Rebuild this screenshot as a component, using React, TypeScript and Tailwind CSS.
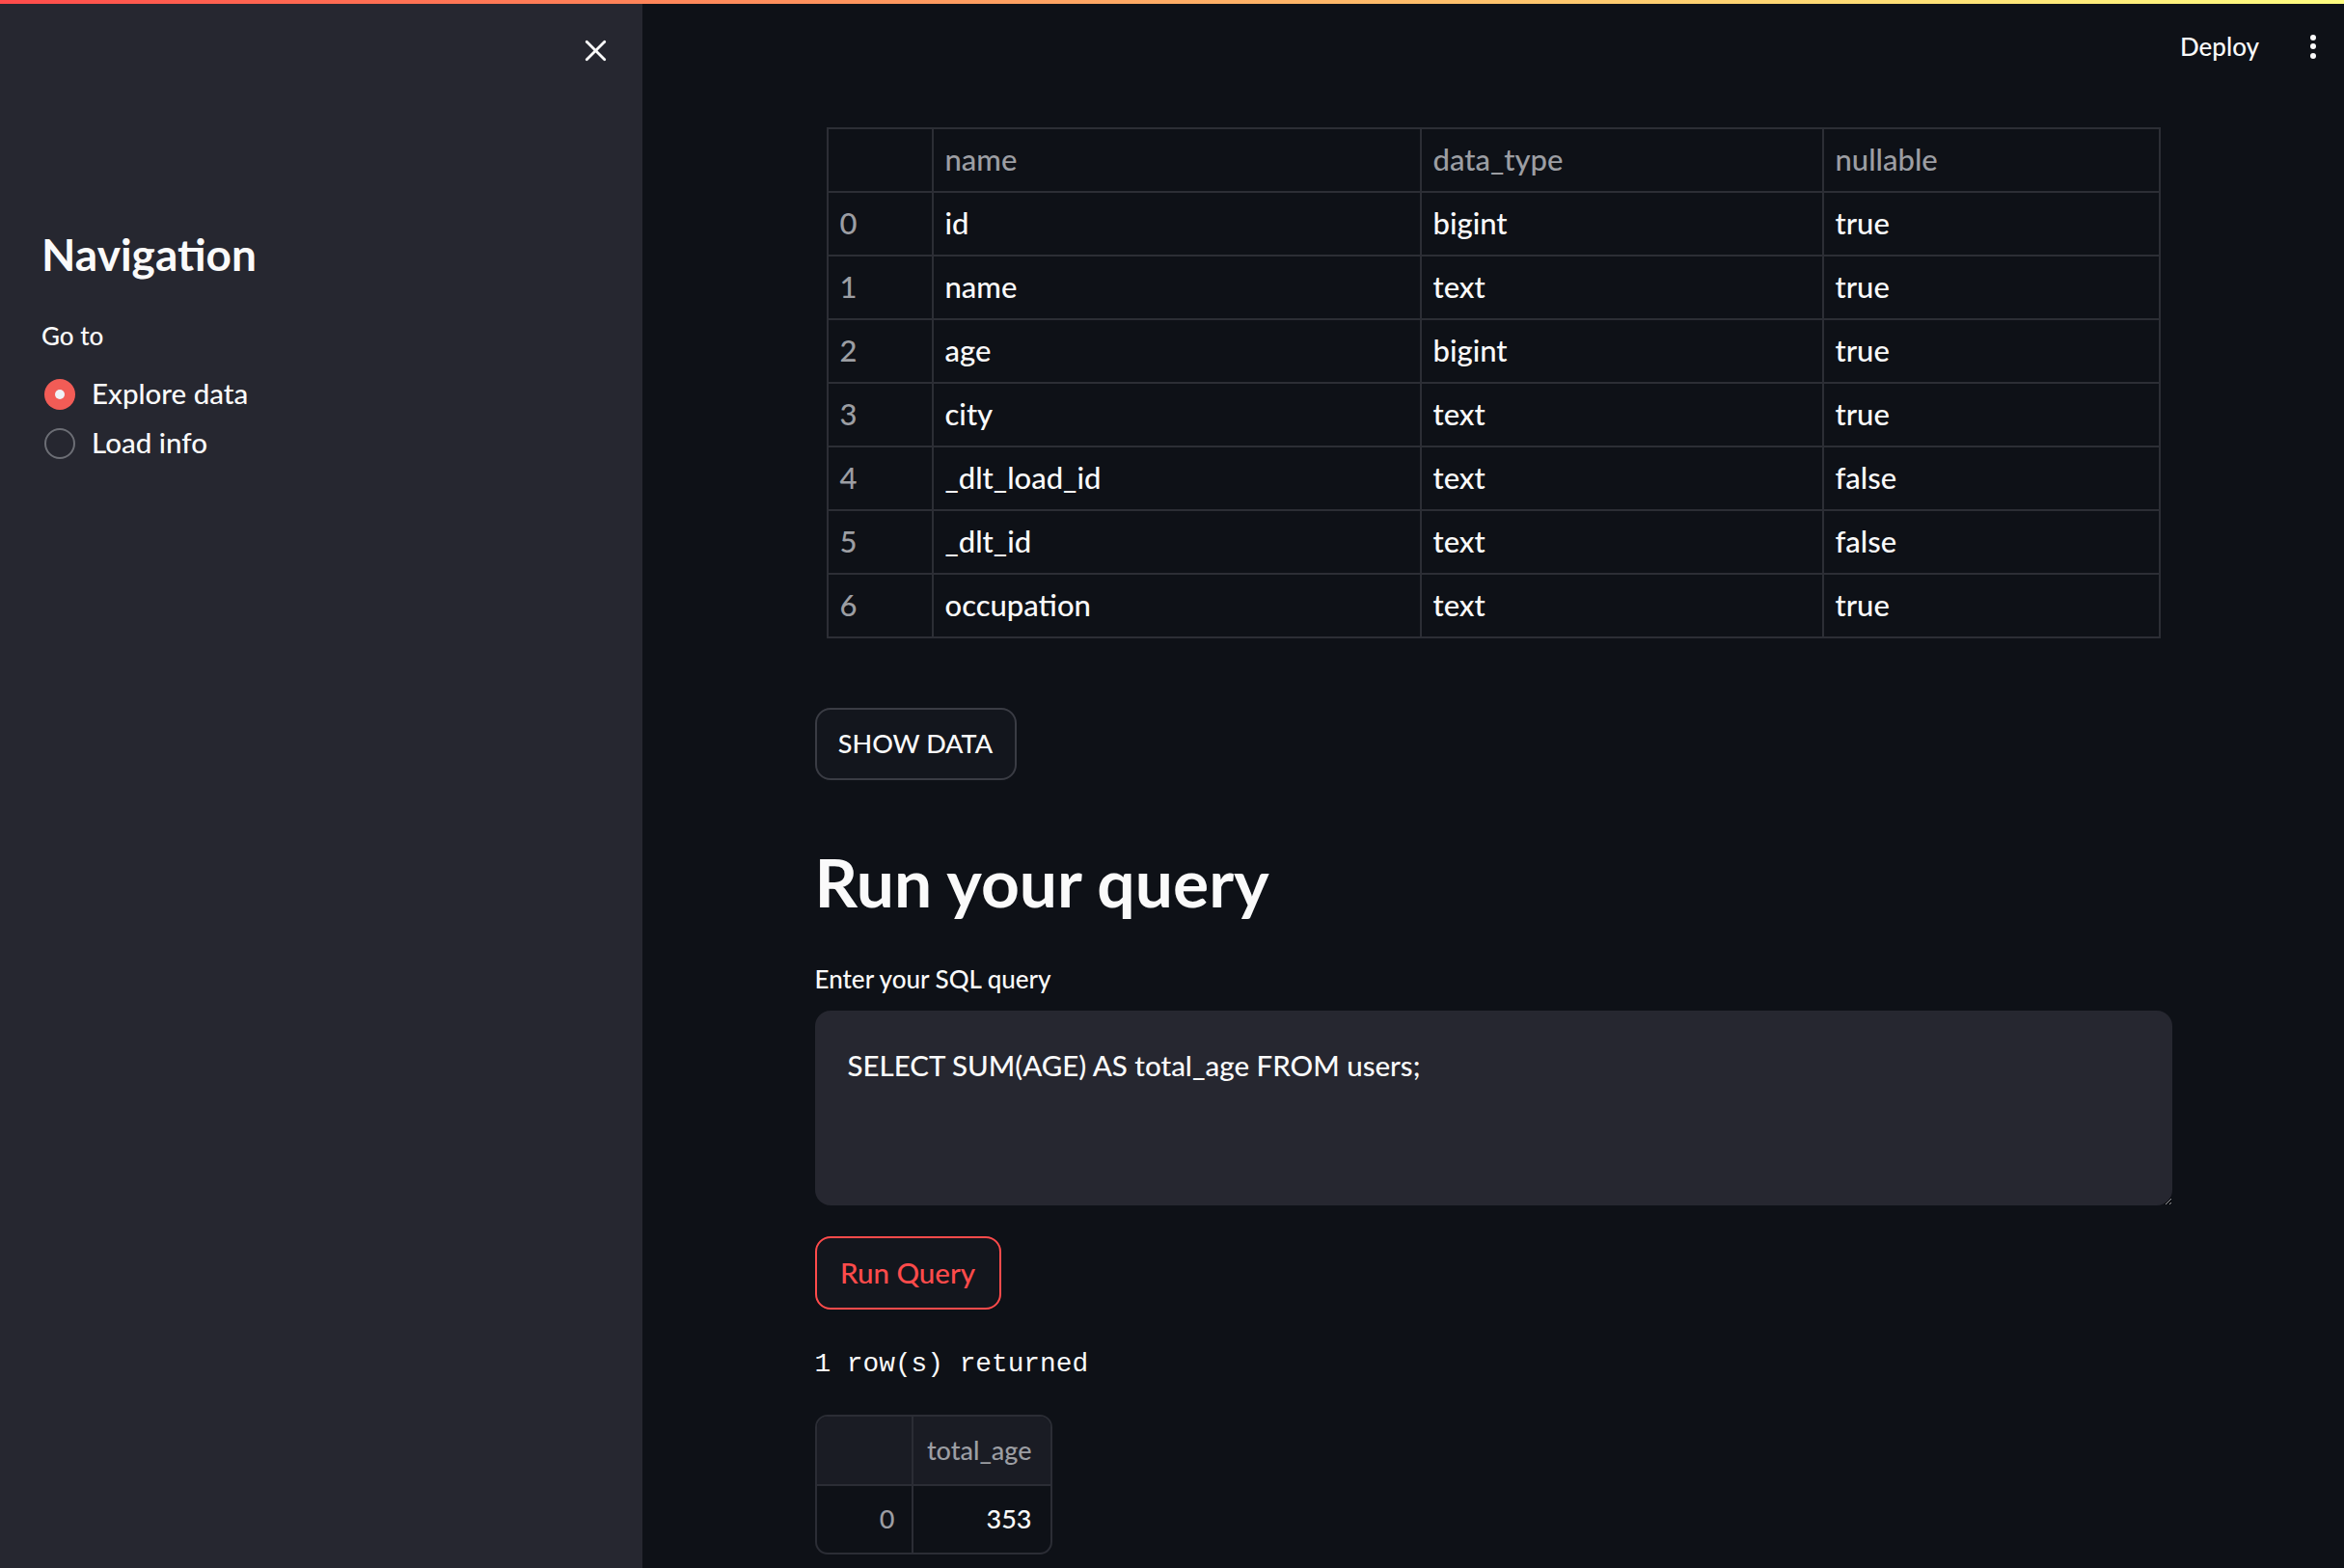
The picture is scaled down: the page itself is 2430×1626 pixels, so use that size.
import { X } from 'lucide-react';

const schema = [
  { idx: 0, name: 'id', type: 'bigint', nullable: 'true' },
  { idx: 1, name: 'name', type: 'text', nullable: 'true' },
  { idx: 2, name: 'age', type: 'bigint', nullable: 'true' },
  { idx: 3, name: 'city', type: 'text', nullable: 'true' },
  { idx: 4, name: '_dlt_load_id', type: 'text', nullable: 'false' },
  { idx: 5, name: '_dlt_id', type: 'text', nullable: 'false' },
  { idx: 6, name: 'occupation', type: 'text', nullable: 'true' },
];

function Cell({ children, muted }: { children?: React.ReactNode; muted?: boolean }) {
  return (
    <div
      className={`h-[66px] flex items-center px-[12px] pb-[2px] border-r-2 border-b-2 border-[#2c2e35] ${
        muted ? 'text-[#9c9ea3]' : 'text-[#fafafa]'
      }`}
    >
      {children}
    </div>
  );
}

export default function App() {
  return (
    <div className="w-[2430px] h-[1626px] flex flex-col bg-[#0e1117] text-[#fafafa] font-medium [font-family:Lato,sans-serif] overflow-hidden">
      {/* decoration bar */}
      <div className="h-[4px] w-full bg-gradient-to-r from-[#ff4b4b] to-[#fffd80]" />

      <div className="flex flex-1 min-h-0">
        {/* Sidebar */}
        <aside className="w-[666px] bg-[#262730] flex flex-col">
          <div className="h-[96px] flex items-center justify-end pr-[30px]">
            <X size={37} strokeWidth={1.8} className="text-[#fafafa]" />
          </div>
          <div className="px-[43px] flex flex-col">
            <h2 className="mt-[136px] text-[46px] leading-[56px] font-bold">Navigation</h2>
            <div className="mt-[36px] text-[26px] leading-[40px]">Go to</div>
            <div className="mt-[15px] flex flex-col">
              <div className="h-[51px] flex items-center gap-[17px] pl-[3px]">
                <span className="w-[32px] h-[32px] rounded-full bg-[#f25c56] flex items-center justify-center">
                  <span className="w-[10px] h-[10px] rounded-full bg-[#f0f2f6]" />
                </span>
                <span className="text-[29.5px]">Explore data</span>
              </div>
              <div className="h-[51px] flex items-center gap-[17px] pl-[3px]">
                <span className="w-[32px] h-[32px] rounded-full border-2 border-[#6c6e75]" />
                <span className="text-[29.5px]">Load info</span>
              </div>
            </div>
          </div>
        </aside>

        {/* Main */}
        <main className="flex-1 flex flex-col">
          <header className="h-[88px] flex items-center justify-end pr-[29px] gap-[53px]">
            <span className="text-[26px]">Deploy</span>
            <div className="flex flex-col gap-[3.5px]">
              <span className="w-[6px] h-[6px] rounded-full bg-[#fafafa]" />
              <span className="w-[6px] h-[6px] rounded-full bg-[#fafafa]" />
              <span className="w-[6px] h-[6px] rounded-full bg-[#fafafa]" />
            </div>
          </header>

          <div className="w-[1407px] mx-auto flex flex-col items-start pt-[40px]">
            {/* schema table */}
            <div className="self-stretch mx-[12px] grid grid-cols-[109px_506px_417px_1fr] border-l-2 border-t-2 border-[#2c2e35] text-[31px]">
              <Cell />
              <Cell muted>name</Cell>
              <Cell muted>data_type</Cell>
              <Cell muted>nullable</Cell>
              {schema.map((r) => (
                <div key={r.idx} className="contents">
                  <Cell muted>{r.idx}</Cell>
                  <Cell>{r.name}</Cell>
                  <Cell>{r.type}</Cell>
                  <Cell>{r.nullable}</Cell>
                </div>
              ))}
            </div>

            <button className="mt-[72px] h-[75px] w-[209px] rounded-[16px] border-2 border-[#3a3c44] bg-[#13161d] text-[27px] text-[#fafafa]">
              SHOW DATA
            </button>

            <h2 className="mt-[64px] text-[69.5px] leading-[82px] font-bold">Run your query</h2>

            <label className="mt-[40px] text-[26px] leading-[40px]">Enter your SQL query</label>

            <textarea
              className="mt-[13px] w-full h-[202px] rounded-[16px] bg-[#262730] border-0 outline-none resize-y px-[34px] pt-[33px] text-[29.5px] leading-[48px] text-[#fafafa] font-medium [color-scheme:dark] [font-family:Lato,sans-serif]"
              defaultValue="SELECT SUM(AGE) AS total_age FROM users;"
            />

            <button className="mt-[32px] h-[76px] w-[193px] rounded-[16px] border-2 border-[#ff4b4b] bg-[#13161d] text-[29.5px] text-[#ff4b4b]">
              Run Query
            </button>

            <div className="mt-[37px] text-[27.8px] leading-[40px] font-normal [font-family:'Liberation_Mono',monospace]">
              1 row(s) returned
            </div>

            {/* result dataframe */}
            <div className="mt-[32px] w-[246px] rounded-[13px] border-2 border-[#2b2d35] overflow-hidden text-[27px]">
              <div className="grid grid-cols-[100px_1fr] bg-[#1a1c24] h-[72px] border-b-2 border-[#2b2d35]">
                <div className="border-r-2 border-[#2b2d35]" />
                <div className="flex items-center justify-end pr-[19px] text-[#9c9ea3]">total_age</div>
              </div>
              <div className="grid grid-cols-[100px_1fr] h-[69px]">
                <div className="border-r-2 border-[#2b2d35] flex items-center justify-end pr-[17px] text-[#9c9ea3]">0</div>
                <div className="flex items-center justify-end pr-[19px]">353</div>
              </div>
            </div>
          </div>
        </main>
      </div>
    </div>
  );
}
